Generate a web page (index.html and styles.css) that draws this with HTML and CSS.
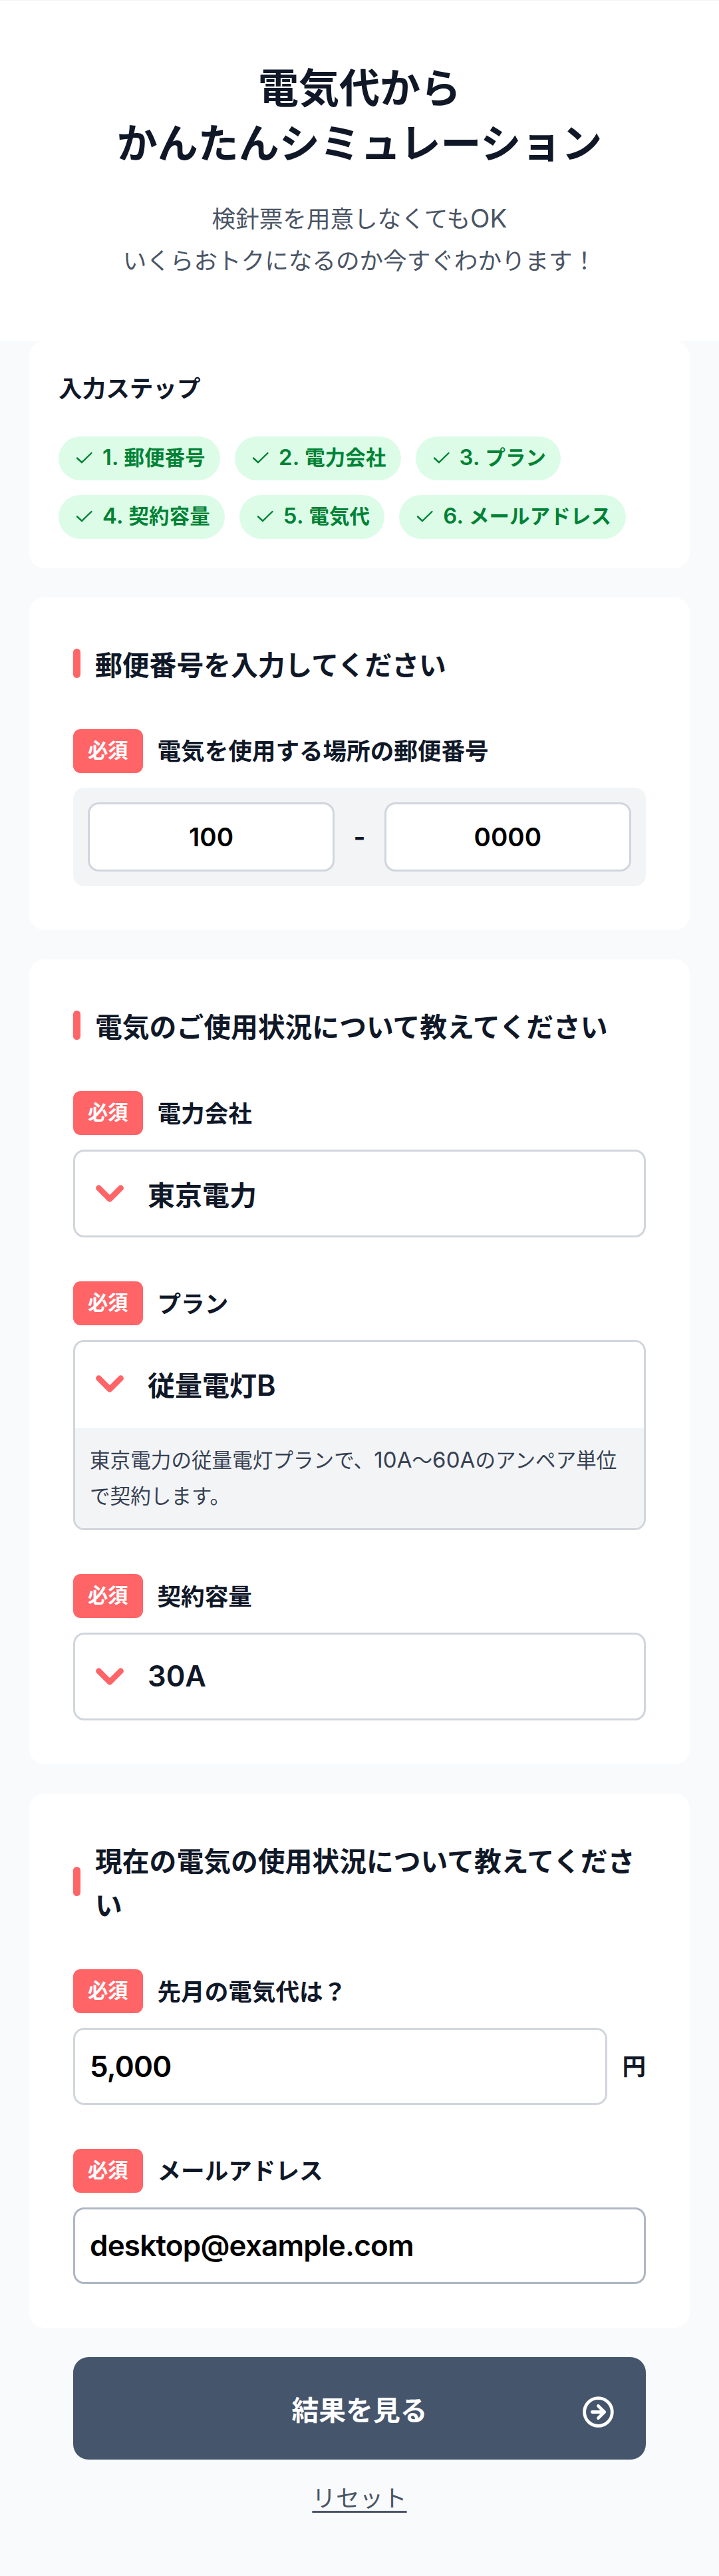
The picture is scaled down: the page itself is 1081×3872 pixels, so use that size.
FILE: index.html
```html
<!DOCTYPE html>
<html lang="ja">
<head>
<meta charset="utf-8">
<title>電気代からかんたんシミュレーション</title>
<link rel="stylesheet" href="styles.css">
</head>
<body>
<svg class="defs" width="0" height="0">
  <symbol id="check" viewBox="0 0 33 33"><path d="M6 17.5 L13 24 L27.5 10" fill="none" stroke="currentColor" stroke-width="2.4" stroke-linecap="round"/></symbol>
  <symbol id="chevron" viewBox="0 0 24 24"><path d="M6 9l6 6 6-6" fill="none" stroke="currentColor" stroke-width="3.2" stroke-linecap="round" stroke-linejoin="round"/></symbol>
</svg>
<header class="hero">
  <h1 class="hero-title">電気代から<br>かんたんシミュレーション</h1>
  <p class="hero-lead">検針票を用意しなくても<span class="lat">OK</span><br>いくらおトクになるのか今すぐわかります！</p>
</header>
<main class="page">
  <section class="card steps">
    <h2 class="steps-title">入力ステップ</h2>
    <ul class="pills">
      <li class="pill"><svg class="tick"><use href="#check"/></svg><span><span class="lat">1. </span>郵便番号</span></li>
      <li class="pill"><svg class="tick"><use href="#check"/></svg><span><span class="lat">2. </span>電力会社</span></li>
      <li class="pill"><svg class="tick"><use href="#check"/></svg><span><span class="lat">3. </span>プラン</span></li>
      <li class="pill"><svg class="tick"><use href="#check"/></svg><span><span class="lat">4. </span>契約容量</span></li>
      <li class="pill"><svg class="tick"><use href="#check"/></svg><span><span class="lat">5. </span>電気代</span></li>
      <li class="pill"><svg class="tick"><use href="#check"/></svg><span><span class="lat">6. </span>メールアドレス</span></li>
    </ul>
  </section>

  <section class="card">
    <h2 class="card-title"><span>郵便番号を入力してください</span></h2>
    <div class="field">
      <div class="label"><span class="badge">必須</span><span class="label-text">電気を使用する場所の郵便番号</span></div>
      <div class="zip">
        <input class="zip-input" value="100">
        <span class="dash">-</span>
        <input class="zip-input" value="0000">
      </div>
    </div>
  </section>

  <section class="card">
    <h2 class="card-title"><span>電気のご使用状況について教えてください</span></h2>
    <div class="field">
      <div class="label"><span class="badge">必須</span><span class="label-text">電力会社</span></div>
      <div class="box"><div class="select"><svg class="chevron"><use href="#chevron"/></svg><span>東京電力</span></div></div>
    </div>
    <div class="field">
      <div class="label"><span class="badge">必須</span><span class="label-text">プラン</span></div>
      <div class="box">
        <div class="select"><svg class="chevron"><use href="#chevron"/></svg><span>従量電灯<span class="lat">B</span></span></div>
        <p class="note">東京電力の従量電灯プランで、<span class="lat">10A</span>〜<span class="lat">60A</span>のアンペア単位<br>で契約します。</p>
      </div>
    </div>
    <div class="field">
      <div class="label"><span class="badge">必須</span><span class="label-text">契約容量</span></div>
      <div class="box"><div class="select"><svg class="chevron"><use href="#chevron"/></svg><span class="lat">30A</span></div></div>
    </div>
  </section>

  <section class="card">
    <h2 class="card-title"><span>現在の電気の使用状況について教えてください</span></h2>
    <div class="field">
      <div class="label"><span class="badge">必須</span><span class="label-text">先月の電気代は？</span></div>
      <div class="amount"><input class="text-input" value="5,000"><span class="unit">円</span></div>
    </div>
    <div class="field">
      <div class="label"><span class="badge">必須</span><span class="label-text">メールアドレス</span></div>
      <input class="text-input email" value="desktop@example.com">
    </div>
  </section>

  <div class="actions">
    <button class="submit"><span></span><span>結果を見る</span>
      <svg class="go" viewBox="0 0 24 24" fill="none" stroke="currentColor" stroke-width="2.1" stroke-linecap="round" stroke-linejoin="round"><circle cx="12" cy="12" r="9.1"/><path d="M12 8l4 4-4 4M8 12h8"/></svg>
    </button>
    <a class="reset">リセット</a>
  </div>
</main>
</body>
</html>
```
FILE: styles.css
```css
* { box-sizing: border-box; margin: 0; padding: 0; }

body {
  background: #f9fafc;
  color: #101828;
  font-family: Inter, "Noto Sans CJK JP", sans-serif;
  font-size: 35.6px;
}

.defs { display: block; position: absolute; }
.lat { font-size: 1.082em; line-height: 1; }

.hero {
  height: 513px;
  padding-top: 91px;
  background: #fff;
  border-top: 1px solid #f3f4f6;
  text-align: center;
}
.hero-title { font-size: 61px; line-height: 83px; font-weight: 700; }
.hero-lead { margin-top: 40px; line-height: 63px; color: #4a5565; }

.page { display: flex; flex-direction: column; gap: 44px; padding: 0 44px; }

.card { padding: 66px; background: #fff; border-radius: 23px; }
.steps { height: 340.5px; padding: 44px; }
.steps-title { font-size: 35.6px; line-height: 55px; font-weight: 700; }

.pills { display: flex; flex-wrap: wrap; gap: 22px; margin-top: 43.5px; list-style: none; }
.pill {
  display: flex;
  align-items: center;
  gap: 11px;
  height: 66px;
  padding: 0 22px;
  border-radius: 33px;
  background: #dcfce7;
  color: #008236;
  font-size: 30.4px;
  line-height: 44px;
  padding-bottom: 2px;
  font-weight: 700;
  letter-spacing: 0.2px;
  white-space: pre;
}
.pill .lat { font-weight: 600; }
.tick { width: 33px; height: 33px; }

.card-title {
  display: flex;
  align-items: center;
  gap: 22px;
  font-size: 40.8px;
  line-height: 66px;
  font-weight: 700;
}
.card-title span { padding-top: 3px; margin-bottom: -3px; }
.card-title::before {
  content: "";
  flex: none;
  width: 11px;
  height: 44px;
  border-radius: 5.5px;
  background: #ff6467;
}

.field { margin-top: 66px; }
.label {
  display: flex;
  align-items: center;
  gap: 22px;
  height: 66px;
  margin-bottom: 22px;
  font-weight: 700;
}
.label-text { padding-bottom: 4px; }
.badge {
  width: 104.5px;
  height: 66px;
  border-radius: 11px;
  background: #ff6467;
  color: #fff;
  font-size: 30.3px;
  line-height: 64px;
  font-weight: 700;
  text-align: center;
}

.zip {
  display: grid;
  grid-template-columns: 1fr 74.5px 1fr;
  align-items: center;
  padding: 22px;
  border-radius: 16.5px;
  background: #f3f4f6;
}
.zip-input {
  width: 100%;
  height: 104.5px;
  border: 3px solid #d1d5dc;
  border-radius: 16.5px;
  background: #fff;
  color: #000;
  font: 600 38.5px Inter, sans-serif;
  text-align: center;
}
.dash { font-size: 38.5px; font-weight: 700; text-align: center; }

.box {
  overflow: hidden;
  border: 3px solid #d1d5dc;
  border-radius: 16.5px;
  background: #fff;
}
.select {
  display: flex;
  align-items: center;
  gap: 24px;
  height: 126px;
  padding-left: 19px;
  font-size: 41px;
  font-weight: 700;
}
.select .lat { font-size: 1.06em; font-weight: 600; }
.chevron { width: 66px; height: 66px; color: #ff6467; }
.note {
  height: 151px;
  margin-top: 3px;
  padding: 22px;
  background: #f3f4f6;
  color: #364153;
  font-size: 30.5px;
  line-height: 53.6px;
  letter-spacing: 0.1px;
  white-space: nowrap;
}

.amount { display: flex; align-items: center; gap: 22px; }
.text-input {
  flex: 1;
  display: block;
  width: 100%;
  min-width: 0;
  height: 115.5px;
  padding: 0 22px;
  border: 3px solid #d1d5dc;
  border-radius: 16.5px;
  background: #fff;
  color: #000;
  font: 600 44px Inter, sans-serif;
  letter-spacing: -0.8px;
}
.email { border-color: #afb6c3; }
.unit { padding-bottom: 4px; font-weight: 700; }

.actions { display: flex; flex-direction: column; align-items: center; padding: 0 66px; }
.submit {
  display: grid;
  grid-template-columns: 1fr auto 1fr;
  align-items: center;
  width: 100%;
  height: 154px;
  padding: 0 44px;
  border: 0;
  border-radius: 23px;
  background: #45556c;
  color: #fff;
  font: 700 40.8px Inter, "Noto Sans CJK JP", sans-serif;
}
.go { justify-self: end; width: 55px; height: 55px; margin-top: 11px; }
.reset {
  margin-top: 30px;
  line-height: 58px;
  color: #4a5565;
  text-decoration: underline;
  text-decoration-thickness: 3px;
  text-underline-offset: 6px;
}
```
